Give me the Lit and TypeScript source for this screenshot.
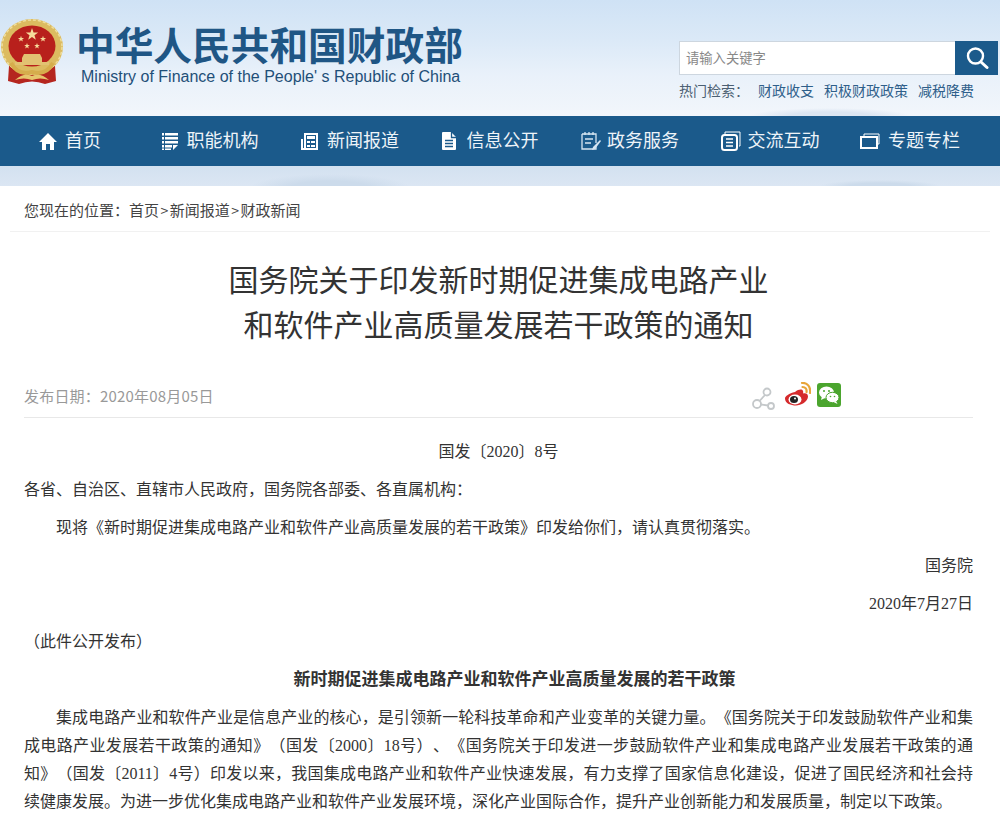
import { LitElement, html, css, svg } from "lit";
import { customElement } from "lit/decorators.js";

const star = (cx: number, cy: number, r: number) => {
  const pts: string[] = [];
  for (let i = 0; i < 10; i++) {
    const a = -Math.PI / 2 + (i * Math.PI) / 5;
    const d = i % 2 ? r * 0.4 : r;
    pts.push(`${(cx + d * Math.cos(a)).toFixed(2)},${(cy + d * Math.sin(a)).toFixed(2)}`);
  }
  return svg`<polygon points=${pts.join(" ")} fill="#f6dc9c"/>`;
};

const emblem = svg`<svg class="emblem" viewBox="0 19 64 67" width="64" height="67" aria-hidden="true">
  <path d="M9 66 L8 81 L19 84 Q32 79 45 84 L56 81 L55 66 Z" fill="#b5261f"/>
  <ellipse cx="32" cy="47" rx="31" ry="28" fill="#dcbb60"/>
  <ellipse cx="32" cy="47" rx="30" ry="27" fill="none" stroke="#efdf9f" stroke-width="1.500" stroke-dasharray="3 2"/>
  <ellipse cx="32" cy="46" rx="23.500" ry="20.500" fill="#b8201c"/>
  ${star(32, 34.500, 6.500)}${star(21, 39, 3.200)}${star(43, 39, 3.200)}${star(27, 46, 3)}${star(37, 46, 3)}
  <path fill="#e2c272" d="M24 54h16l2 4H22zM22 58h20v4H22zM15 62h34v3H15z"/>
  <path d="M11 63 Q18 76 32 72 Q46 76 53 63" fill="none" stroke="#d6ad4c" stroke-width="4"/>
  <path d="M15 80 Q24 72 32 76 Q40 72 49 80 Q40 77 32 80 Q24 77 15 80Z" fill="#e6c66c"/>
</svg>`;

const icons: Record<string, unknown> = {
  home: svg`<svg viewBox="0 0 18 18" width="18" height="18"><path fill="#fff" d="M9 1 L18 10 H15 V18 H11 V12 H7 V18 H3 V10 H0 Z"/></svg>`,
  list: svg`<svg viewBox="0 0 16 18" width="16" height="18"><path fill="#fff" d="M0 1h2v2.500H0zM3 1h13v2.500H3zM0 5h2v2.500H0zM3 5h13v2.500H3zM0 9h2v2.500H0zM3 9h13v2.500H3zM0 13h2v2.500H0zM3 13h7v2.500H3zM0 16.500h2V18H0zM3 16.500h6V18H3zM11 13h5l-5 5z"/></svg>`,
  news: svg`<svg viewBox="0 0 18 18" width="18" height="18"><path fill="none" stroke="#fff" stroke-width="2" d="M1 7v10h15V2H4v15"/><path fill="#fff" d="M6 4h8v3H6zM6 9h3v2H6zM10 9h4v2h-4zM6 13h3v2H6zM10 13h4v2h-4z"/></svg>`,
  doc: svg`<svg viewBox="0 0 15 18" width="15" height="18"><path fill="#fff" d="M1 0h8l5 5v12a1 1 0 0 1-1 1H1a1 1 0 0 1-1-1V1a1 1 0 0 1 1-1Z"/><path fill="none" stroke="#1b5a8b" stroke-width="1.300" d="M9.500 0v5.500H15M3 8.500h8M3 11.500h8M3 14.500h8"/></svg>`,
  service: svg`<svg viewBox="0 0 20 20" width="20" height="20"><path fill="none" stroke="#d7e6f2" stroke-width="1.300" d="M1 3h14v9M15 15v3H1V3M4 1v3M8 1v3M12 1v3M4 8h8M4 12h6"/><path fill="#d7e6f2" d="M19 9l1 1-6 8-3 1 1-3z"/></svg>`,
  chat: svg`<svg viewBox="0 0 20 20" width="20" height="20"><path fill="none" stroke="#fff" stroke-width="1" d="M4 3V1h15v14h-1"/><rect x="1" y="4" width="15" height="15" rx="2.500" fill="none" stroke="#fff" stroke-width="2"/><path stroke="#fff" stroke-width="1.500" d="M5 8h7M5 11.500h7M5 15h7"/></svg>`,
  topic: svg`<svg viewBox="0 0 20 16" width="20" height="16"><path fill="none" stroke="#fff" d="M4 4V1h15v10h-2"/><rect x="1" y="4" width="16" height="11" fill="none" stroke="#fff" stroke-width="2"/></svg>`,
};

const navItems = [
  ["home", "首页"], ["list", "职能机构"], ["news", "新闻报道"], ["doc", "信息公开"],
  ["service", "政务服务"], ["chat", "交流互动"], ["topic", "专题专栏"],
];

@customElement("app-root")
export class AppRoot extends LitElement {
  static styles = css`
    :host { display: block; width: 1000px; height: 817px; overflow: hidden; background: #fff; font-family: "Noto Sans CJK SC", sans-serif; color: #333; text-spacing-trim: space-all; }
    .top { height: 116px; padding: 0 2px 0 0; box-sizing: border-box; display: flex; justify-content: space-between;
      background:
        radial-gradient(ellipse 80px 8px at 830px 116px, #dce6f2 0 50%, transparent 100%),
        linear-gradient(#cfe2f5 0, #dbe9f7 40px, #e9f1fa 75px, #f2f6fb 116px); }
    .brand { display: flex; align-items: flex-start; padding-top: 19px; }
    .emblem { flex: none; margin-right: 12px; }
    .names { padding-top: 5px; }
    .cn { font: 700 38.700px/38px "Noto Sans CJK SC", sans-serif; color: #1f5685; white-space: nowrap; }
    .en { font: 16px/20px "Liberation Sans", sans-serif; color: #1f4f78; margin: 5px 0 0 5px; white-space: nowrap; }
    .tools { width: 319px; padding-top: 41px; }
    .search { display: flex; height: 34px; box-sizing: border-box; border: 1px solid #cdd6df; border-right: 0; background: #fff; }
    .ph { flex: 1; padding-left: 6px; font-size: 13.300px; line-height: 32px; color: #888; }
    .btn { width: 43px; margin: -1px 0; background: #1b5a8b; display: flex; align-items: center; justify-content: center; }
    .hot { display: flex; font-size: 14px; line-height: 18px; margin-top: 6px; color: #4b5f72; white-space: nowrap; }
    .hot .lead { width: 79px; }
    .hot .k { margin-right: 10px; color: #2f5f8a; }
    nav { height: 50px; background: #1b5a8b; display: grid; grid-template-columns: repeat(7, 140px); }
    nav a { display: flex; align-items: center; justify-content: center; gap: 8px; color: #eef4f9; font-size: 18px; white-space: nowrap; }
    nav a span { padding-bottom: 4px; }
    nav a.list { gap: 9px; }
    nav a.doc { gap: 10px; }
    nav a.service { gap: 6px; }
    nav a.chat { gap: 7px; }
    .band { height: 20px; background:
        radial-gradient(ellipse 80px 14px at 330px 22px, #ccdbeb 0 50%, transparent 100%),
        radial-gradient(ellipse 60px 6px at 880px 20px, #ccdbeb 0 50%, transparent 100%),
        linear-gradient(#d3e1f0, #dbe6f3); }
    .crumb { margin: 0 10px; padding-left: 14px; height: 46px; box-sizing: border-box; line-height: 47px; font-size: 15px; color: #444; border-bottom: 1px solid #f1f1f1; white-space: nowrap; }
    .crumb .sep { font-size: 14px; margin: 0 1.500px; }
    main { padding: 0 27px 0 24px; }
    h1 { margin: 24px 0 0; font-size: 30px; line-height: 45px; font-weight: 400; text-align: center; color: #333; }
    .meta { margin-top: 28px; height: 44px; display: flex; align-items: center; justify-content: space-between; font-size: 15px; letter-spacing: .2px; color: #999; border-bottom: 1px solid #e8e8e8; box-sizing: border-box; }
    .share { display: flex; align-items: flex-start; margin: 3px 132px 0 0; }
    .share .link { margin: 4px 9px 0 0; }
    .share .wb { margin: -1px 6px 0 0; }
    .body { padding-top: 15px; font-size: 16px; color: #333; font-family: "Liberation Serif", "Noto Sans CJK SC", serif; }
    .body p { margin: 0; line-height: 38px; }
    .center { text-align: center; }
    .indent { text-indent: 2em; }
    .right { text-align: right; }
    h2 { margin: 0; font-size: 17px; line-height: 38px; font-weight: 700; text-align: center; text-indent: 32px; color: #333; }
    .body p.long { line-height: 28px; text-align: justify; margin-top: 5px; }
  `;

  render() {
    return html`
      <header class="top">
        <div class="brand">
          ${emblem}
          <div class="names">
            <div class="cn">中华人民共和国财政部</div>
            <div class="en">Ministry of Finance of the People' s Republic of China</div>
          </div>
        </div>
        <div class="tools">
          <div class="search">
            <div class="ph">请输入关键字</div>
            <div class="btn"><svg viewBox="0 0 24 24" width="24" height="24"><circle cx="10.500" cy="10" r="7.500" fill="none" stroke="#fff" stroke-width="2.400"/><path d="M16 16l6 5.500" stroke="#fff" stroke-width="3" stroke-linecap="round"/></svg></div>
          </div>
          <div class="hot">
            <span class="lead">热门检索：</span>
            <span class="k">财政收支</span><span class="k">积极财政政策</span><span class="k">减税降费</span>
          </div>
        </div>
      </header>
      <nav>
        ${navItems.map(([i, t]) => html`<a class=${i}>${icons[i]}<span>${t}</span></a>`)}
      </nav>
      <div class="band"></div>
      <div class="crumb">您现在的位置：首页<span class="sep">&gt;</span>新闻报道<span class="sep">&gt;</span>财政新闻</div>
      <main>
        <h1>国务院关于印发新时期促进集成电路产业<br />和软件产业高质量发展若干政策的通知</h1>
        <div class="meta">
          <span>发布日期：2020年08月05日</span>
          <div class="share">
            <svg class="link" viewBox="0 0 24 24" width="24" height="24"><g fill="none" stroke="#c4c8ca" stroke-width="1.800"><circle cx="15" cy="5" r="3.500"/><circle cx="5" cy="17" r="4"/><circle cx="19" cy="19" r="3"/><path d="M13 8l-5.500 6M9 17.500l7 1"/></g></svg>
            <svg class="wb" viewBox="0 0 26 24" width="26" height="24"><g transform="translate(0 3)"><path fill="#d52a2c" d="M10 7c4-3 7-3 8-1 .5 1.500 0 2.500 0 2.500 3-.8 5 .5 5 3 0 5-7 9-12 9-5 0-11-2-11-7 0-2.500 4-5 10-6.500Z"/><ellipse cx="10" cy="14.500" rx="6.500" ry="5" fill="#fff"/><ellipse cx="9" cy="14.500" rx="4" ry="3.500" fill="#222"/><circle cx="10" cy="13.500" r="1" fill="#fff"/></g><path d="M17 1c5-.5 9 3.500 8 10M17.500 5c3 0 4.500 2 4 5" fill="none" stroke="#e8a53a" stroke-width="2.200" stroke-linecap="round"/></svg>
            <svg viewBox="0 0 24 24" width="24" height="24"><rect width="24" height="24" rx="3" fill="#4ba52e"/><ellipse cx="9.500" cy="9.500" rx="7.500" ry="6" fill="#fff"/><path d="M5 13l-1 4 4-2z" fill="#fff"/><ellipse cx="15.500" cy="14.500" rx="6.500" ry="5.200" fill="#fff" stroke="#4ba52e"/><path d="M19 18l1.500 3-4-2z" fill="#fff"/><g fill="#4ba52e"><circle cx="7" cy="8" r="1"/><circle cx="12" cy="8" r="1"/><circle cx="13.500" cy="13.500" r=".8"/><circle cx="17.500" cy="13.500" r=".8"/></g></svg>
          </div>
        </div>
        <section class="body">
          <p class="center">国发〔2020〕8号</p>
          <p>各省、自治区、直辖市人民政府，国务院各部委、各直属机构：</p>
          <p class="indent">现将《新时期促进集成电路产业和软件产业高质量发展的若干政策》印发给你们，请认真贯彻落实。</p>
          <p class="right">国务院</p>
          <p class="right">2020年7月27日</p>
          <p>（此件公开发布）</p>
          <h2>新时期促进集成电路产业和软件产业高质量发展的若干政策</h2>
          <p class="indent long">集成电路产业和软件产业是信息产业的核心，是引领新一轮科技革命和产业变革的关键力量。《国务院关于印发鼓励软件产业和集成电路产业发展若干政策的通知》（国发〔2000〕18号）、《国务院关于印发进一步鼓励软件产业和集成电路产业发展若干政策的通知》（国发〔2011〕4号）印发以来，我国集成电路产业和软件产业快速发展，有力支撑了国家信息化建设，促进了国民经济和社会持续健康发展。为进一步优化集成电路产业和软件产业发展环境，深化产业国际合作，提升产业创新能力和发展质量，制定以下政策。</p>
        </section>
      </main>
    `;
  }
}
